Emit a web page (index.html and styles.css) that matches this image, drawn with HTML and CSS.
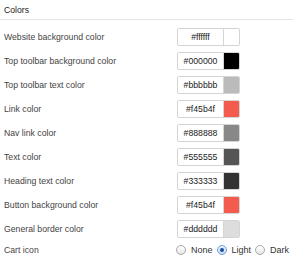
FILE: index.html
```html
<!DOCTYPE html>
<html lang="en">
<head>
  <meta charset="UTF-8">
  <title>Colors</title>
  <link rel="stylesheet" href="styles.css">
</head>
<body>
  <div class="panel">
    <h3 class="panel-title">Colors</h3>
    <div class="rows">
      <div class="row">
        <label>Website background color</label>
        <div class="color-field">
          <span class="color-value">#ffffff</span>
          <span class="swatch" style="background:#ffffff"></span>
        </div>
      </div>
      <div class="row">
        <label>Top toolbar background color</label>
        <div class="color-field">
          <span class="color-value">#000000</span>
          <span class="swatch" style="background:#000000"></span>
        </div>
      </div>
      <div class="row">
        <label>Top toolbar text color</label>
        <div class="color-field">
          <span class="color-value">#bbbbbb</span>
          <span class="swatch" style="background:#bbbbbb"></span>
        </div>
      </div>
      <div class="row">
        <label>Link color</label>
        <div class="color-field">
          <span class="color-value">#f45b4f</span>
          <span class="swatch" style="background:#f45b4f"></span>
        </div>
      </div>
      <div class="row">
        <label>Nav link color</label>
        <div class="color-field">
          <span class="color-value">#888888</span>
          <span class="swatch" style="background:#888888"></span>
        </div>
      </div>
      <div class="row">
        <label>Text color</label>
        <div class="color-field">
          <span class="color-value">#555555</span>
          <span class="swatch" style="background:#555555"></span>
        </div>
      </div>
      <div class="row">
        <label>Heading text color</label>
        <div class="color-field">
          <span class="color-value">#333333</span>
          <span class="swatch" style="background:#333333"></span>
        </div>
      </div>
      <div class="row">
        <label>Button background color</label>
        <div class="color-field">
          <span class="color-value">#f45b4f</span>
          <span class="swatch" style="background:#f45b4f"></span>
        </div>
      </div>
      <div class="row">
        <label>General border color</label>
        <div class="color-field">
          <span class="color-value">#dddddd</span>
          <span class="swatch" style="background:#dddddd"></span>
        </div>
      </div>
      <div class="row row-radio">
        <label>Cart icon</label>
        <div class="radios">
          <span class="radio"></span><span class="radio-label">None</span>
          <span class="radio checked"></span><span class="radio-label">Light</span>
          <span class="radio"></span><span class="radio-label">Dark</span>
        </div>
      </div>
    </div>
  </div>
</body>
</html>
```

FILE: styles.css
```css
body {
  margin: 0;
  padding: 0;
  background: #fff;
  font-family: 'Liberation Sans', Arial, sans-serif;
  font-size: 8.7px;
  color: #444;
}

.panel {
  width: 293px;
}

.panel-title {
  margin: 0;
  height: 19px;
  line-height: 20px;
  padding-left: 4px;
  font-size: 8.7px;
  font-weight: normal;
  color: #222;
  border-bottom: 1px solid #e6e6e6;
}

.rows {
  padding-top: 5px;
}

.row {
  display: grid;
  grid-template-columns: 177px 63px;
  align-items: center;
  height: 24px;
}

.row label {
  padding-left: 4px;
}

.color-field {
  display: flex;
  height: 18px;
  border: 1px solid #d4d4d4;
  border-radius: 2px;
  box-sizing: border-box;
  overflow: hidden;
}

.color-value {
  flex: 1;
  text-align: center;
  line-height: 16px;
  color: #222;
}

.swatch {
  width: 15px;
  border-left: 1px solid #d4d4d4;
}

.row-radio {
  height: 17px;
  grid-template-columns: 176px auto;
}

.radios {
  display: flex;
  align-items: center;
}

.radio {
  width: 8px;
  height: 8px;
  border: 1px solid #a8a8a8;
  border-radius: 50%;
  background: linear-gradient(#fff, #e6e6e6);
  position: relative;
}

.radio.checked {
  border-color: #6f9ed8;
  background: linear-gradient(#eaf3fd, #c9dcf3);
}

.radio.checked::after {
  content: '';
  position: absolute;
  top: 2px;
  left: 2px;
  width: 4px;
  height: 4px;
  border-radius: 50%;
  background: #1c4f9c;
}

.radio-label {
  margin: 0 4px 0 5px;
  font-size: 9px;
  color: #333;
}
```
